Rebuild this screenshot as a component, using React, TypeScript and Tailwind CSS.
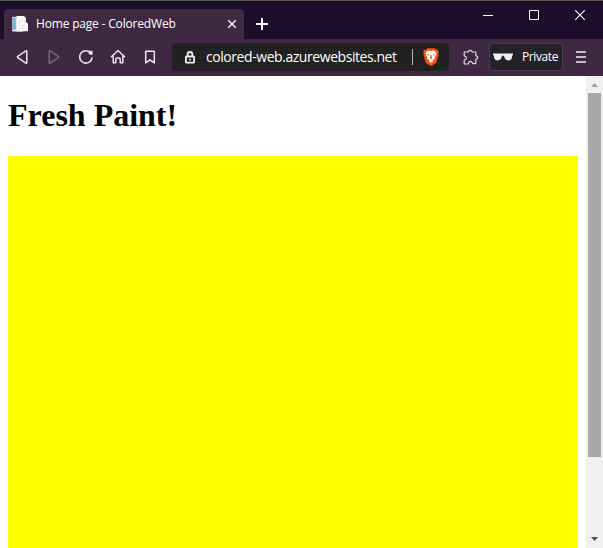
import type { ReactNode } from "react";

function NavIcon({ children, dim = false }: { children: ReactNode; dim?: boolean }) {
  return (
    <svg
      viewBox="0 0 20 20"
      className={dim ? "h-5 w-5 text-[#76667a]" : "h-5 w-5 text-[#e9e5ea]"}
      fill="none"
      stroke="currentColor"
      strokeWidth="1.5"
      strokeLinejoin="round"
      strokeLinecap="round"
    >
      {children}
    </svg>
  );
}

function PageIcon() {
  return (
    <svg viewBox="0 0 16 16" className="h-4 w-4 shrink-0">
      <path d="M.3.8h10v14.7H.3z" fill="#eef3f6" />
      <path d="M.8 1.5h3v12.3h-3z" fill="#6fb1da" />
      <path d="M4 .5h7v15H4z" fill="#e0e7ec" />
      <path d="M5 0h7l2 2v3H9v9H5z" fill="#f7f9fa" />
      <path d="M7.5 5H13l3 3v7H7.5z" fill="#fafafa" stroke="#d8dde0" strokeWidth=".6" />
      <path d="M9 10h5M9 12.3h5" fill="none" stroke="#d0d5d9" strokeWidth=".8" />
    </svg>
  );
}

function BraveIcon() {
  return (
    <svg viewBox="0 0 16 18" className="h-[18px] w-4 shrink-0">
      <path d="M4.5.2h7L13 1.7l1.5-.2 1.3 2.3-.5 1.3.3 1.2-2.2 8.1-1 1.2L8 18l-4.4-2.4-1-1.2L.4 6.3l.3-1.2-.5-1.3 1.3-2.3 1.5.2z" fill="#f9510f" />
      <path d="M8 3.2l2-.6 2 .5 1.6 2.4-.8 2.1-1.2 1.8.2 1.5-1.8.8-.7.7 1 1.1L8 14.8l-2.3-1.3 1-1.1-.7-.7-1.8-.8.2-1.5-1.2-1.8-.8-2.1L4 3.1l2-.5z" fill="#fff" />
      <path d="M4 6l2.6.7-.5.9-1.3-.3zM12 6l-2.6.7.5.9 1.3-.3zM7.2 7.3h1.6l-.2 1.8.7 1L8 11.1l-1.3-1 .7-1z" fill="#f9510f" />
    </svg>
  );
}

function TabStrip() {
  return (
    <header className="flex h-[39px] shrink-0 border-t border-[#5c5853] bg-[#1c0e2b] text-white">
      <div className="mt-2 ml-1 flex h-[30px] w-60 items-center rounded-t-[4px] bg-[#3f2841] pl-2">
        <PageIcon />
        <span className="ml-2 w-[140px] font-['Open_Sans','Noto_Sans',sans-serif] text-[12px] leading-4 tracking-[-0.18px] whitespace-nowrap">
          Home page - ColoredWeb
        </span>
        <svg viewBox="0 0 10 10" className="ml-[51px] h-[10px] w-[10px]" stroke="#eeeaf0" strokeWidth="1.5">
          <path d="M1.2 1.2l7.6 7.6M8.8 1.2L1.2 8.8" />
        </svg>
      </div>
      <svg viewBox="0 0 12 12" className="mt-[17px] ml-3 h-3 w-3" stroke="white" strokeWidth="2">
        <path d="M6 0v12M0 6h12" />
      </svg>
      <div className="mt-[9px] mr-[18px] ml-auto flex h-[11px] gap-9">
        <svg viewBox="0 0 10 11" className="h-[11px] w-[10px]" stroke="white">
          <path d="M0 5.5h10" />
        </svg>
        <svg viewBox="0 0 10 11" className="h-[11px] w-[10px]" stroke="white" fill="none">
          <path d="M.5.5h9v9h-9z" />
        </svg>
        <svg viewBox="0 0 10 11" className="h-[11px] w-[10px]" stroke="white" strokeWidth="1.1">
          <path d="M.2.2l9.6 9.6M9.8.2L.2 9.8" />
        </svg>
      </div>
    </header>
  );
}

function Toolbar() {
  return (
    <nav className="flex h-[37px] shrink-0 items-start bg-[#3f2841] pt-1 pl-3 text-white">
      <div className="flex h-7 items-center gap-3">
        <NavIcon><path d="M14.8 4.2v11.6c0 .6-.5.7-.9.4L5.7 10.6a.7.7 0 010-1.2l8.2-5.6c.4-.3.9-.2.9.4z" /></NavIcon>
        <NavIcon dim><path d="M5.2 4.2v11.6c0 .6.5.7.9.4l8.2-5.6a.7.7 0 000-1.2L6.1 3.8c-.4-.3-.9-.2-.9.4z" /></NavIcon>
        <NavIcon>
          <path d="M12.2 4.2A6.2 6.2 0 1016 11" strokeWidth="1.6" />
          <path d="M13 4.4h2.8v2.8l-2.4-.6z" fill="currentColor" />
        </NavIcon>
        <NavIcon><path d="M3.4 9.8L10 3.5l6.6 6.3M5.2 8.7v7.1h2.6v-3.6a1.2 1.2 0 011.2-1.2h2a1.2 1.2 0 011.2 1.2v3.6h2.6V8.7" /></NavIcon>
        <NavIcon><path d="M5.7 4.2h8.6v11.7L10 12.8l-4.3 3.1z" /></NavIcon>
      </div>
      <div className="ml-3 flex h-7 w-[277px] items-center rounded-[4px] bg-[#222222] pl-[13px]">
        <svg viewBox="0 0 10 13" className="h-[13px] w-[10px] shrink-0" fill="none" stroke="#eeeeee" strokeWidth="1.8">
          <path d="M2.6 5V3.4a2.4 2.4 0 014.8 0V5" />
          <rect x=".9" y="5.5" width="8.2" height="6.2" rx=".6" />
          <path d="M4.1 8.6h1.8" />
        </svg>
        <span className="ml-[11px] w-[206px] font-['Open_Sans','Noto_Sans',sans-serif] text-[14px] leading-5 tracking-[-0.44px] whitespace-nowrap">
          colored-web.azurewebsites.net
        </span>
        <span className="h-4 w-px bg-[#b5b5b5]" />
        <span className="ml-[10px]"><BraveIcon /></span>
      </div>
      <svg viewBox="0 0 16 16" className="mt-[6px] ml-[14px] h-4 w-4 shrink-0" fill="none" stroke="#ddd7df" strokeWidth="1.2" strokeLinejoin="round">
        <path d="M1.2 3h3.6l.6-.6a1.9 1.9 0 013.4 0l.6.6h3.4v3.6l1.3.6a1.8 1.8 0 010 2.6l-1.3.6v4.2H9.9l-.9-1.4a1.8 1.8 0 00-3 0L5.2 15h-4v-3.8l1.5-.8a1.8 1.8 0 000-2.8l-1.5-.8z" />
      </svg>
      <div className="ml-[10px] flex h-7 w-[74px] shrink-0 items-center rounded-[4px] border border-[#424044] bg-[#242228] pl-[3px]">
        <svg viewBox="0 0 20 8" className="h-2 w-5 shrink-0" fill="#f1f0f1">
          <path d="M0 .5h20V2l-.8.5c-.2 3.5-1.4 4.9-3.7 4.9-2.8 0-4-1.5-4.4-4.6h-2.2C8.5 5.9 7.3 7.4 4.5 7.4 2.2 7.4 1 6 .8 2.5L0 2z" />
        </svg>
        <span className="ml-[9px] font-['Open_Sans','Noto_Sans',sans-serif] text-[12px] leading-4 tracking-[-0.4px]">Private</span>
      </div>
      <div className="mt-2 ml-[13px] flex w-[10px] shrink-0 flex-col gap-[3px]">
        <span className="h-[2px] bg-[#c4bdc5]" />
        <span className="h-[2px] bg-[#c4bdc5]" />
        <span className="h-[2px] bg-[#c4bdc5]" />
      </div>
    </nav>
  );
}

export default function App() {
  return (
    <div className="flex h-screen w-full flex-col overflow-hidden bg-white">
      <TabStrip />
      <Toolbar />
      <div className="flex min-h-0 flex-1">
        <main className="flex min-w-0 flex-1 flex-col pt-[21px] pr-2 pl-2">
          <h1 className="h-[59px] font-['Liberation_Serif',serif] text-[32px] leading-[37px] font-bold text-black">
            Fresh Paint!
          </h1>
          <div className="flex-1 bg-[#ffff00]" />
        </main>
        <aside className="flex w-[17px] shrink-0 flex-col items-center bg-[#f0f0f0]">
          <svg viewBox="0 0 7 4" className="mt-[7px] h-1 w-[7px]" fill="#a3a3a3">
            <path d="M3.5 0L7 4H0z" />
          </svg>
          <div className="mt-[6px] h-[364px] w-[13px] bg-[#a8a8a8]" />
          <svg viewBox="0 0 7 4" className="mt-auto mb-[7px] h-1 w-[7px]" fill="#505050">
            <path d="M0 0h7L3.5 4z" />
          </svg>
        </aside>
      </div>
    </div>
  );
}
